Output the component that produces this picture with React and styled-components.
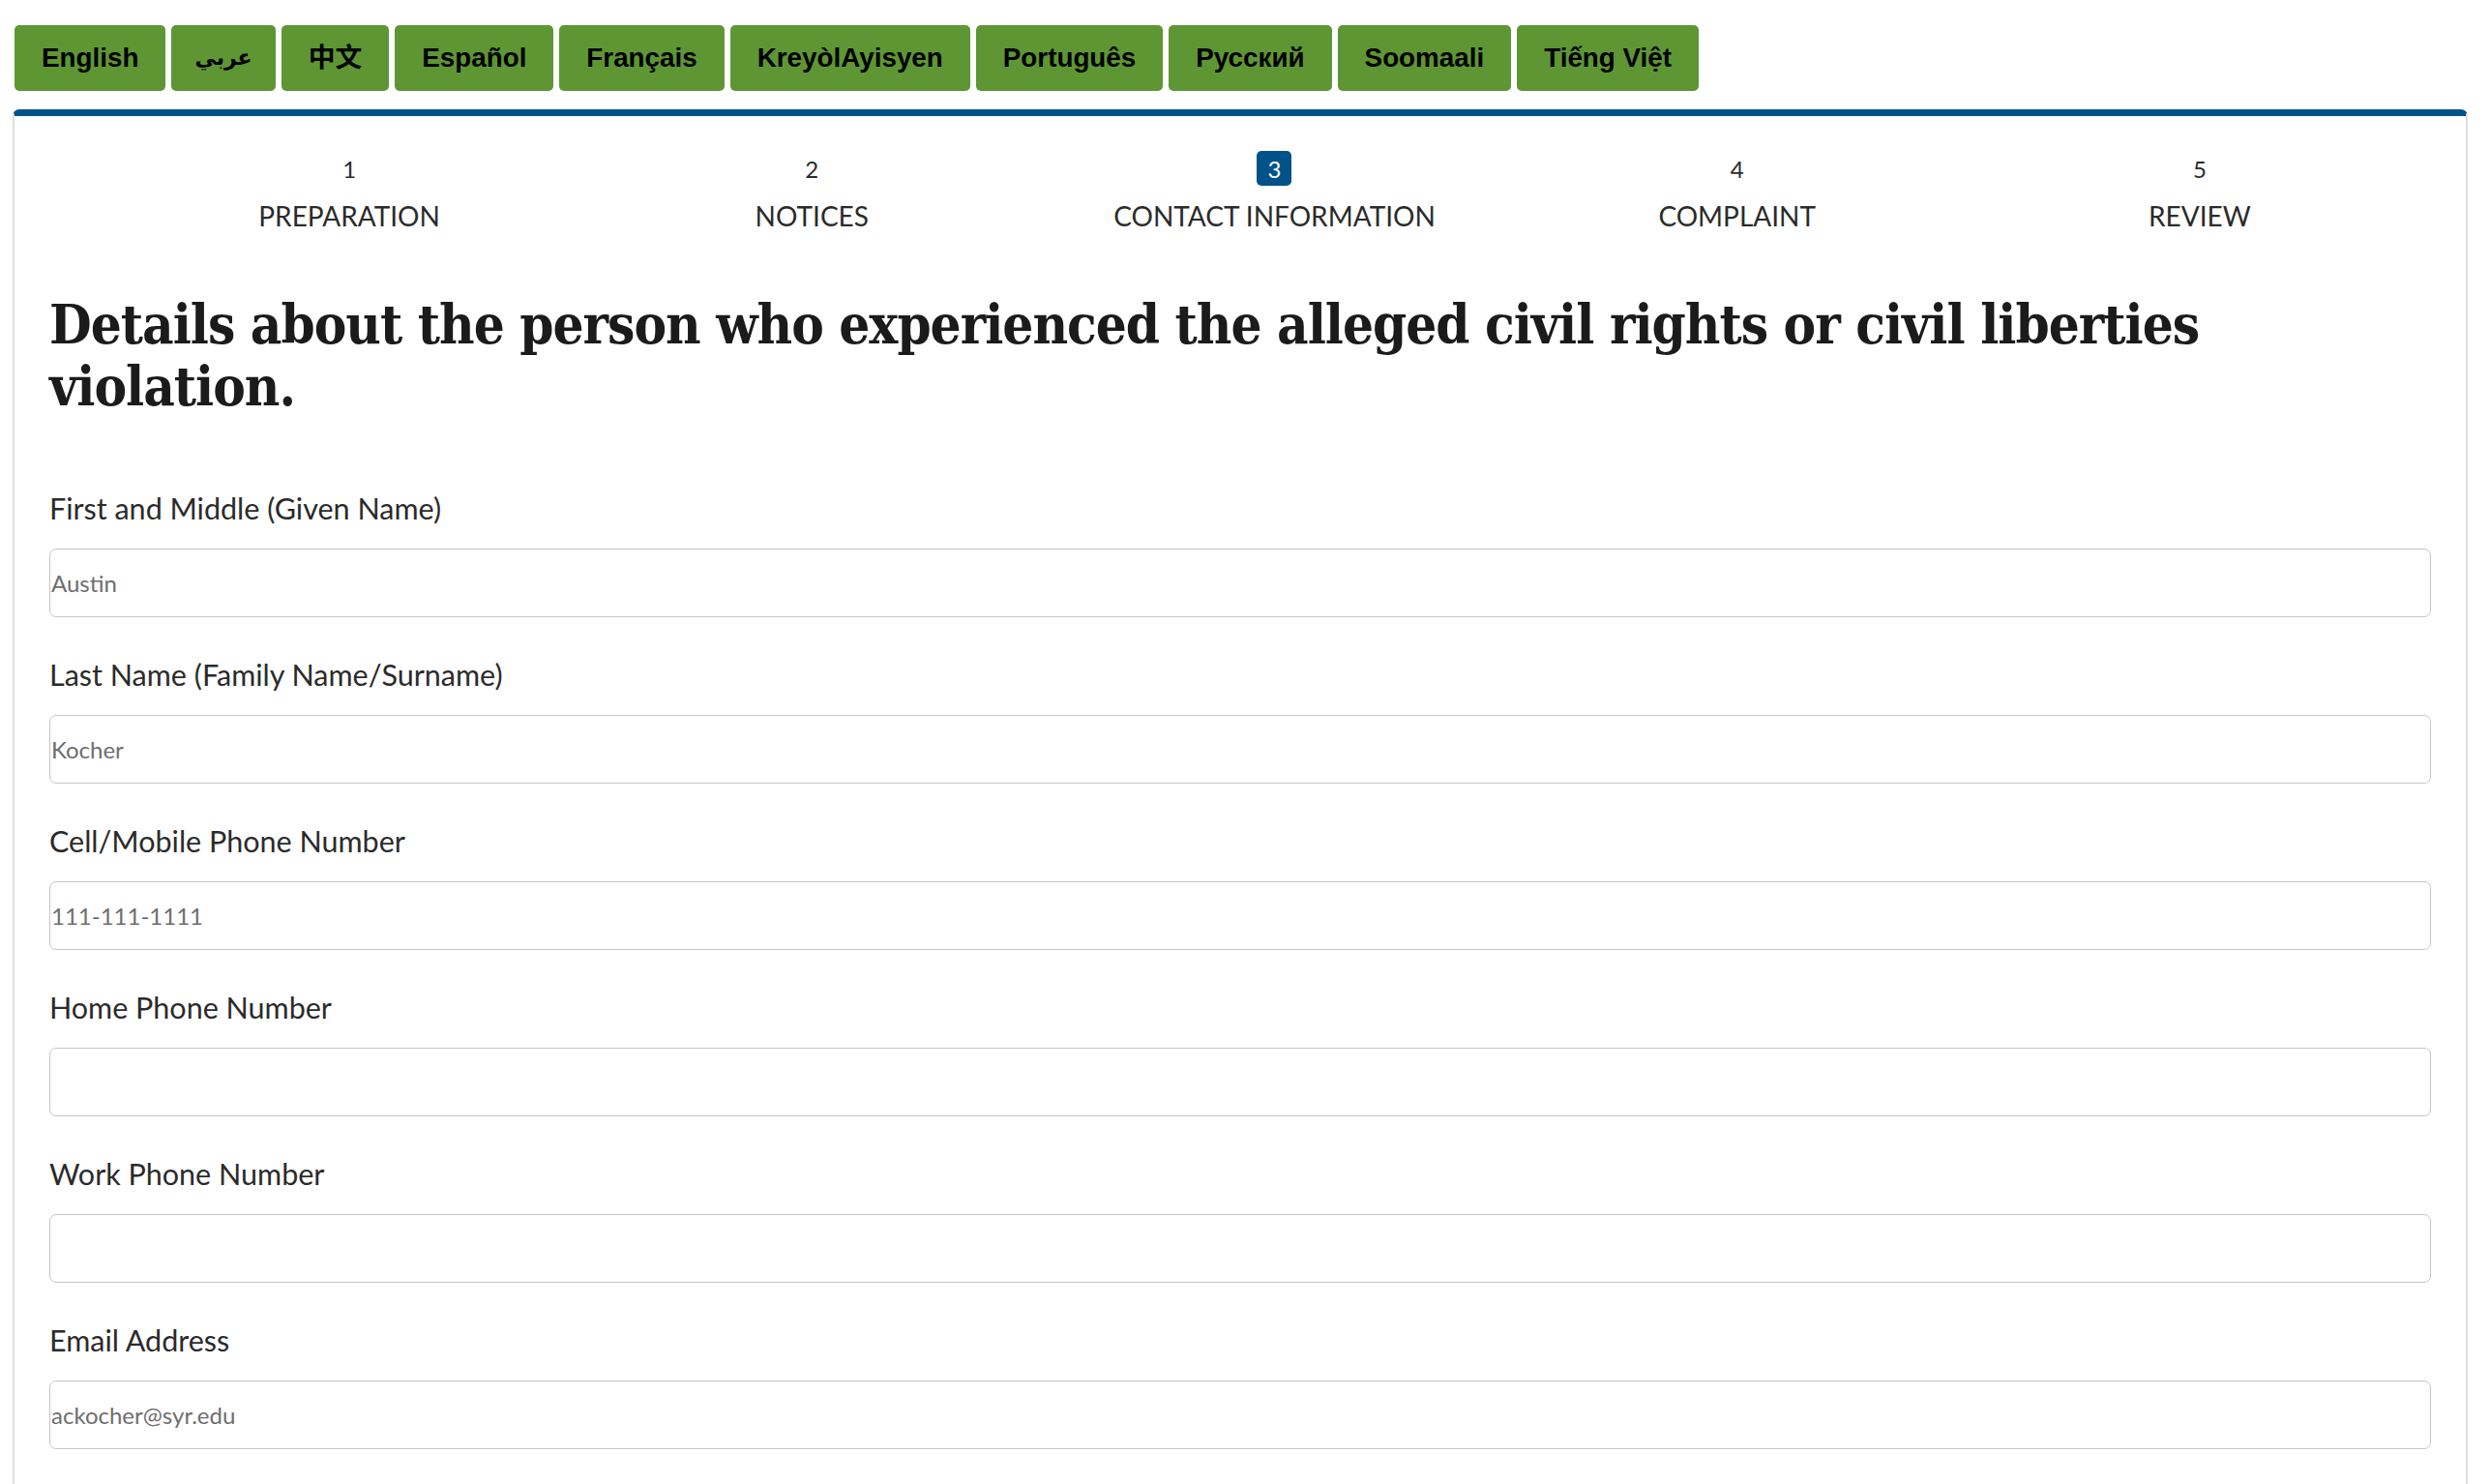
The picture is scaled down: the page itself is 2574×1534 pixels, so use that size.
import React from "react";
import styled, { createGlobalStyle } from "styled-components";

const GlobalStyle = createGlobalStyle`
  html, body { margin: 0; padding: 0; background: #ffffff; }
  body { font-family: "Lato", "Liberation Sans", sans-serif; }
  * { box-sizing: border-box; }
`;

const Page = styled.div`
  padding: 26px 23px 0 13px;
`;

const LangBar = styled.nav`
  display: flex;
  gap: 6px;
  padding-left: 2px;
`;

const LangButton = styled.button`
  height: 68px;
  padding: 0 ${(p) => (p.$arabic ? "24px" : "28px")};
  border: none;
  border-radius: 5px;
  background: #5e9634;
  color: #000;
  font-family: "Liberation Sans", "DejaVu Sans", "Noto Sans CJK SC", sans-serif;
  font-weight: 700;
  font-size: ${(p) => (p.$arabic ? "22px" : "27.8px")};
  line-height: 1;
  display: flex;
  align-items: center;
  justify-content: center;
  cursor: pointer;
`;

const Card = styled.section`
  margin-top: 19px;
  border-top: 7px solid #005288;
  border-left: 2px solid #dedede;
  border-right: 2px solid #dedede;
  border-radius: 7px 7px 0 0;
  padding: 36px 36px 80px 36px;
`;

const Steps = styled.ol`
  list-style: none;
  margin: 0;
  padding: 0 0 0 71px;
  display: grid;
  grid-template-columns: repeat(5, 1fr);
`;

const Step = styled.li`
  display: flex;
  flex-direction: column;
  align-items: center;
`;

const StepNumber = styled.span`
  min-width: 36px;
  height: 36px;
  display: flex;
  align-items: center;
  justify-content: center;
  border-radius: 5px;
  font-size: 24px;
  color: ${(p) => (p.$active ? "#ffffff" : "#2b2b2b")};
  background: ${(p) => (p.$active ? "#005288" : "transparent")};
`;

const StepLabel = styled.span`
  margin-top: 13px;
  font-size: 28px;
  line-height: 36px;
  text-transform: uppercase;
  color: #2b2b2b;
`;

const Heading = styled.h1`
  margin: 62px 0 0 0;
  max-width: 2330px;
  font-family: "DejaVu Serif Condensed", "DejaVu Serif", serif;
  font-weight: 700;
  font-size: 56px;
  line-height: 64px;
  letter-spacing: -1px;
  color: #1b1b1b;
`;

const Form = styled.form`
  margin-top: 76px;
  display: flex;
  flex-direction: column;
  gap: 41px;
`;

const Field = styled.div`
  display: flex;
  flex-direction: column;
  gap: 24px;
`;

const Label = styled.label`
  font-size: 30.5px;
  line-height: 36px;
  color: #2b2b2b;
`;

const Input = styled.input`
  width: 100%;
  height: 71px;
  border: 1.5px solid #c6c6c6;
  border-radius: 7px;
  padding: 0 0 0 1px;
  font-family: "Lato", "Liberation Sans", sans-serif;
  font-size: 24px;
  color: #6e6e6e;
  background: #fff;
  outline: none;
`;

const languages = [
  { label: "English" },
  { label: "عربي", arabic: true },
  { label: "中文" },
  { label: "Español" },
  { label: "Français" },
  { label: "KreyòlAyisyen" },
  { label: "Português" },
  { label: "Русский" },
  { label: "Soomaali" },
  { label: "Tiếng Việt" },
];

const steps = ["Preparation", "Notices", "Contact Information", "Complaint", "Review"];

const fields = [
  { id: "first", label: "First and Middle (Given Name)", value: "Austin" },
  { id: "last", label: "Last Name (Family Name/Surname)", value: "Kocher" },
  { id: "cell", label: "Cell/Mobile Phone Number", value: "111-111-1111" },
  { id: "home", label: "Home Phone Number", value: "" },
  { id: "work", label: "Work Phone Number", value: "" },
  { id: "email", label: "Email Address", value: "ackocher@syr.edu" },
];

export default function App() {
  return (
    <Page>
      <GlobalStyle />
      <LangBar>
        {languages.map((l) => (
          <LangButton key={l.label} type="button" $arabic={l.arabic}>
            {l.label}
          </LangButton>
        ))}
      </LangBar>
      <Card>
        <Steps>
          {steps.map((s, i) => (
            <Step key={s}>
              <StepNumber $active={i === 2}>{i + 1}</StepNumber>
              <StepLabel>{s}</StepLabel>
            </Step>
          ))}
        </Steps>
        <Heading>
          Details about the person who experienced the alleged civil rights or civil liberties violation.
        </Heading>
        <Form onSubmit={(e) => e.preventDefault()}>
          {fields.map((f) => (
            <Field key={f.id}>
              <Label htmlFor={f.id}>{f.label}</Label>
              <Input id={f.id} type="text" defaultValue={f.value} />
            </Field>
          ))}
        </Form>
      </Card>
    </Page>
  );
}
